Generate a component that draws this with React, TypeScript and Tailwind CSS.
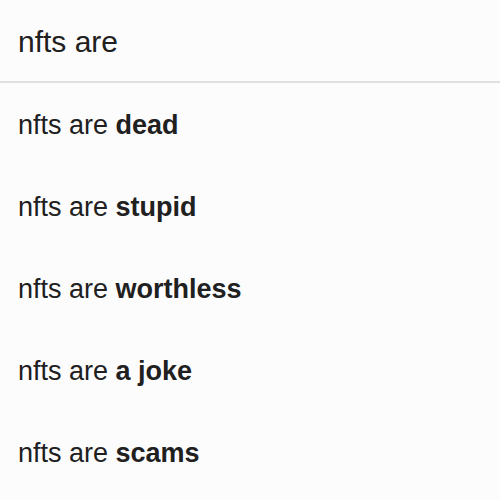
import React from "react";

const items = ["dead", "stupid", "worthless", "a joke", "scams"];

export default function App() {
  return (
    <div
      className="w-[500px] h-[500px] overflow-hidden bg-[#fdfcfd] text-[#202020]"
      style={{ fontFamily: '"Liberation Sans", Arial, sans-serif' }}
    >
      <div className="h-[81px] pl-[18px] pt-[2px] text-[30px] leading-[79px]">nfts are</div>
      <div className="h-[2px] bg-[#dfdfdf]" />
      <div className="flex flex-col">
        {items.map((t) => (
          <div key={t} className="h-[82px] pl-[18px] text-[27px] leading-[82px] pt-[1px]">
            nfts are <span className="font-bold">{t}</span>
          </div>
        ))}
      </div>
    </div>
  );
}
